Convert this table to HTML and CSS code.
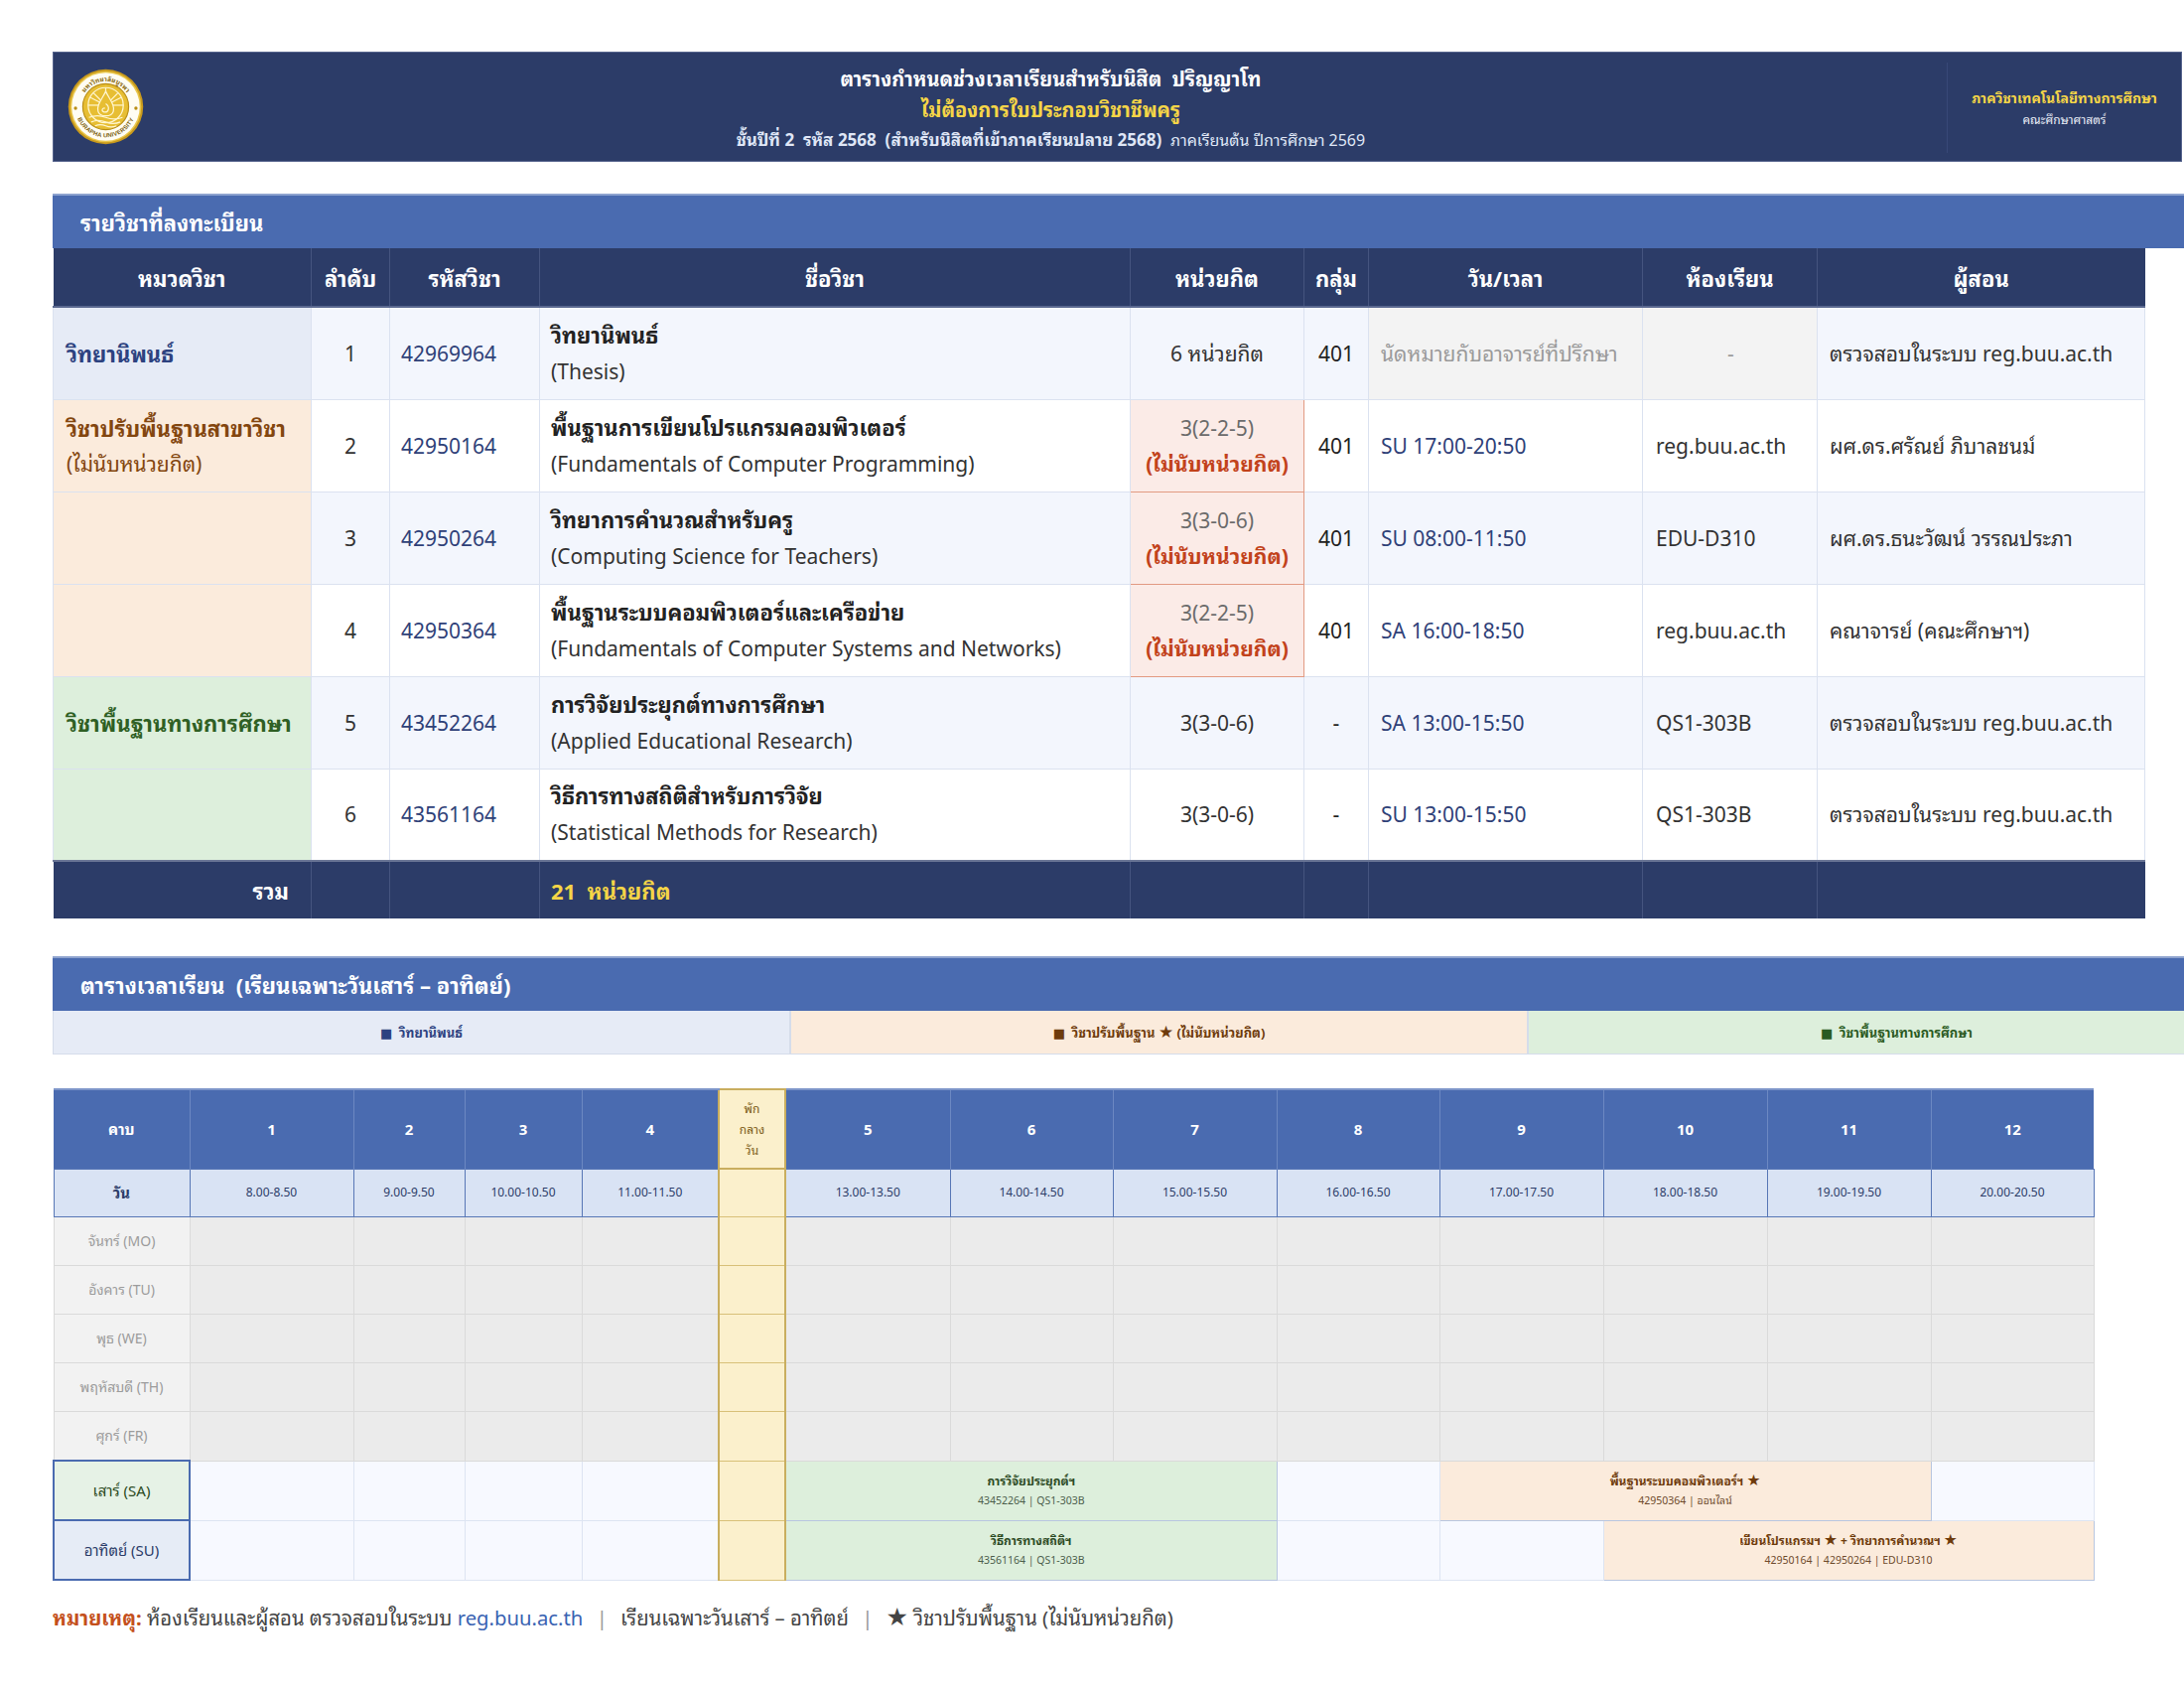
FILE: index.html
```html
<!DOCTYPE html>
<html lang="th">
<head>
<meta charset="utf-8">
<title>ตารางกำหนดช่วงเวลาเรียน</title>
<link rel="stylesheet" href="styles.css">
</head>
<body>
<div class="page">
  <header class="top">
    <div class="logo-box">
      <svg class="logo" viewBox="0 0 100 100" aria-label="Burapha University">
        <defs>
          <path id="arcTop" d="M 17 50 A 33 33 0 0 1 83 50"/>
          <path id="arcBot" d="M 10 50 A 40 40 0 0 0 90 50"/>
        </defs>
        <circle cx="50" cy="50" r="49" fill="#c99a1c"/>
        <circle cx="50" cy="50" r="46.5" fill="#e9c64a"/>
        <circle cx="50" cy="50" r="44.5" fill="#fffdf3"/>
        <circle cx="50" cy="50" r="30" fill="#e7be33" stroke="#b98e16" stroke-width="1.5"/>
        <text class="logo-th"><textPath href="#arcTop" startOffset="50%" text-anchor="middle">มหาวิทยาลัยบูรพา</textPath></text>
        <text class="logo-en"><textPath href="#arcBot" startOffset="50%" text-anchor="middle">BURAPHA UNIVERSITY</textPath></text>
        <circle cx="10.5" cy="52" r="2.2" fill="#b98e16"/>
        <circle cx="89.5" cy="52" r="2.2" fill="#b98e16"/>
        <g stroke="#fff6d0" stroke-width="1.6" fill="none">
          <circle cx="50" cy="48" r="23"/>
          <line x1="50" y1="48" x2="50" y2="25"/>
          <line x1="50" y1="48" x2="66" y2="32"/>
          <line x1="50" y1="48" x2="34" y2="32"/>
          <line x1="50" y1="48" x2="73" y2="48"/>
          <line x1="50" y1="48" x2="27" y2="48"/>
          <line x1="50" y1="48" x2="70" y2="38"/>
          <line x1="50" y1="48" x2="30" y2="38"/>
        </g>
        <path d="M50 30 C 56 42 62 48 60 56 C 58 64 42 64 40 56 C 38 48 44 42 50 30 Z" fill="#e7be33" stroke="#fff6d0" stroke-width="1.6"/>
        <path d="M50 46 C 56 50 54 58 48 57 C 44 56 45 51 49 52" fill="none" stroke="#fff6d0" stroke-width="1.6"/>
        <g stroke="#fff6d0" stroke-width="1.6" fill="none">
          <path d="M28 64 Q 39 60 50 64 T 72 64"/>
          <path d="M31 70 Q 40 66 50 70 T 69 70"/>
          <path d="M36 75 Q 43 72 50 75 T 64 75"/>
        </g>
      </svg>
    </div>
    <div class="title-box">
      <div class="t1">ตารางกำหนดช่วงเวลาเรียนสำหรับนิสิต&nbsp; ปริญญาโท</div>
      <div class="t2">ไม่ต้องการใบประกอบวิชาชีพครู</div>
      <div class="t3"><b>ชั้นปีที่ 2&nbsp; รหัส 2568&nbsp; (สำหรับนิสิตที่เข้าภาคเรียนปลาย 2568)</b>&nbsp; <span class="t3-sem">ภาคเรียนต้น ปีการศึกษา 2569</span></div>
    </div>
    <div class="dept">
      <div class="d1">ภาควิชาเทคโนโลยีทางการศึกษา</div>
      <div class="d2">คณะศึกษาศาสตร์</div>
    </div>
  </header>

  <section class="sec sec-courses">
    <h2 class="sec-bar">รายวิชาที่ลงทะเบียน</h2>
    <table class="courses">
      <colgroup>
        <col class="c-cat"><col class="c-no"><col class="c-code"><col class="c-name"><col class="c-cr"><col class="c-grp"><col class="c-time"><col class="c-room"><col class="c-tch">
      </colgroup>
      <thead>
        <tr>
          <th>หมวดวิชา</th><th>ลำดับ</th><th>รหัสวิชา</th><th>ชื่อวิชา</th><th>หน่วยกิต</th><th>กลุ่ม</th><th>วัน/เวลา</th><th>ห้องเรียน</th><th>ผู้สอน</th>
        </tr>
      </thead>
      <tbody>
        <tr class="r-alt">
          <td class="cat cat-thesis">วิทยานิพนธ์</td>
          <td class="no">1</td>
          <td class="code">42969964</td>
          <td class="name"><span class="nm-th">วิทยานิพนธ์</span><span class="nm-en">(Thesis)</span></td>
          <td class="cr">6 หน่วยกิต</td>
          <td class="grp">401</td>
          <td class="time muted">นัดหมายกับอาจารย์ที่ปรึกษา</td>
          <td class="room muted center">-</td>
          <td class="tch">ตรวจสอบในระบบ reg.buu.ac.th</td>
        </tr>
        <tr>
          <td class="cat cat-base"><span class="cat-l1">วิชาปรับพื้นฐานสาขาวิชา</span><span class="cat-l2">(ไม่นับหน่วยกิต)</span></td>
          <td class="no">2</td>
          <td class="code">42950164</td>
          <td class="name"><span class="nm-th">พื้นฐานการเขียนโปรแกรมคอมพิวเตอร์</span><span class="nm-en">(Fundamentals of Computer Programming)</span></td>
          <td class="cr cr-nc"><span class="cr-v">3(2-2-5)</span><span class="cr-x">(ไม่นับหน่วยกิต)</span></td>
          <td class="grp">401</td>
          <td class="time">SU 17:00-20:50</td>
          <td class="room">reg.buu.ac.th</td>
          <td class="tch">ผศ.ดร.ศรัณย์ ภิบาลชนม์</td>
        </tr>
        <tr class="r-alt">
          <td class="cat cat-base"></td>
          <td class="no">3</td>
          <td class="code">42950264</td>
          <td class="name"><span class="nm-th">วิทยาการคำนวณสำหรับครู</span><span class="nm-en">(Computing Science for Teachers)</span></td>
          <td class="cr cr-nc"><span class="cr-v">3(3-0-6)</span><span class="cr-x">(ไม่นับหน่วยกิต)</span></td>
          <td class="grp">401</td>
          <td class="time">SU 08:00-11:50</td>
          <td class="room">EDU-D310</td>
          <td class="tch">ผศ.ดร.ธนะวัฒน์ วรรณประภา</td>
        </tr>
        <tr>
          <td class="cat cat-base"></td>
          <td class="no">4</td>
          <td class="code">42950364</td>
          <td class="name"><span class="nm-th">พื้นฐานระบบคอมพิวเตอร์และเครือข่าย</span><span class="nm-en">(Fundamentals of Computer Systems and Networks)</span></td>
          <td class="cr cr-nc"><span class="cr-v">3(2-2-5)</span><span class="cr-x">(ไม่นับหน่วยกิต)</span></td>
          <td class="grp">401</td>
          <td class="time">SA 16:00-18:50</td>
          <td class="room">reg.buu.ac.th</td>
          <td class="tch">คณาจารย์ (คณะศึกษาฯ)</td>
        </tr>
        <tr class="r-alt">
          <td class="cat cat-edu">วิชาพื้นฐานทางการศึกษา</td>
          <td class="no">5</td>
          <td class="code">43452264</td>
          <td class="name"><span class="nm-th">การวิจัยประยุกต์ทางการศึกษา</span><span class="nm-en">(Applied Educational Research)</span></td>
          <td class="cr">3(3-0-6)</td>
          <td class="grp">-</td>
          <td class="time">SA 13:00-15:50</td>
          <td class="room">QS1-303B</td>
          <td class="tch">ตรวจสอบในระบบ reg.buu.ac.th</td>
        </tr>
        <tr>
          <td class="cat cat-edu"></td>
          <td class="no">6</td>
          <td class="code">43561164</td>
          <td class="name"><span class="nm-th">วิธีการทางสถิติสำหรับการวิจัย</span><span class="nm-en">(Statistical Methods for Research)</span></td>
          <td class="cr">3(3-0-6)</td>
          <td class="grp">-</td>
          <td class="time">SU 13:00-15:50</td>
          <td class="room">QS1-303B</td>
          <td class="tch">ตรวจสอบในระบบ reg.buu.ac.th</td>
        </tr>
      </tbody>
      <tfoot>
        <tr>
          <td class="tot-l">รวม</td><td></td><td></td>
          <td class="tot-v">21&nbsp; หน่วยกิต</td>
          <td></td><td></td><td></td><td></td><td></td>
        </tr>
      </tfoot>
    </table>
  </section>

  <section class="sec sec-sched">
    <h2 class="sec-bar">ตารางเวลาเรียน&nbsp; (เรียนเฉพาะวันเสาร์ – อาทิตย์)</h2>
    <div class="legend">
      <div class="lg lg-thesis">■&nbsp; วิทยานิพนธ์</div>
      <div class="lg lg-base">■&nbsp; วิชาปรับพื้นฐาน <span class="st">★</span> (ไม่นับหน่วยกิต)</div>
      <div class="lg lg-edu">■&nbsp; วิชาพื้นฐานทางการศึกษา</div>
    </div>

    <table class="tt">
      <colgroup>
        <col class="w137"><col class="w165"><col class="w112"><col class="w118"><col class="w138"><col class="w67">
        <col class="w166"><col class="w164"><col class="w165"><col class="w164"><col class="w165"><col class="w165"><col class="w165"><col class="w164">
      </colgroup>
      <thead>
        <tr class="tt-h">
          <th>คาบ</th><th>1</th><th>2</th><th>3</th><th>4</th>
          <th class="brk brk-h">พัก<br>กลาง<br>วัน</th>
          <th>5</th><th>6</th><th>7</th><th>8</th><th>9</th><th>10</th><th>11</th><th>12</th>
        </tr>
        <tr class="tt-d">
          <th class="tt-dl">วัน</th>
          <td>8.00-8.50</td><td>9.00-9.50</td><td>10.00-10.50</td><td>11.00-11.50</td>
          <td class="brk"></td>
          <td>13.00-13.50</td><td>14.00-14.50</td><td>15.00-15.50</td><td>16.00-16.50</td><td>17.00-17.50</td><td>18.00-18.50</td><td>19.00-19.50</td><td>20.00-20.50</td>
        </tr>
      </thead>
      <tbody>
        <tr class="wd"><th>จันทร์ (MO)</th><td></td><td></td><td></td><td></td><td class="brk"></td><td></td><td></td><td></td><td></td><td></td><td></td><td></td><td></td></tr>
        <tr class="wd"><th>อังคาร (TU)</th><td></td><td></td><td></td><td></td><td class="brk"></td><td></td><td></td><td></td><td></td><td></td><td></td><td></td><td></td></tr>
        <tr class="wd"><th>พุธ (WE)</th><td></td><td></td><td></td><td></td><td class="brk"></td><td></td><td></td><td></td><td></td><td></td><td></td><td></td><td></td></tr>
        <tr class="wd"><th>พฤหัสบดี (TH)</th><td></td><td></td><td></td><td></td><td class="brk"></td><td></td><td></td><td></td><td></td><td></td><td></td><td></td><td></td></tr>
        <tr class="wd"><th>ศุกร์ (FR)</th><td></td><td></td><td></td><td></td><td class="brk"></td><td></td><td></td><td></td><td></td><td></td><td></td><td></td><td></td></tr>
        <tr class="we">
          <th class="we-sa">เสาร์ (SA)</th>
          <td></td><td></td><td></td><td></td><td class="brk"></td>
          <td colspan="3" class="ev ev-g"><div class="ev-t">การวิจัยประยุกต์ฯ</div><div class="ev-s">43452264 | QS1-303B</div></td>
          <td></td>
          <td colspan="3" class="ev ev-o"><div class="ev-t">พื้นฐานระบบคอมพิวเตอร์ฯ <span class="st">★</span></div><div class="ev-s">42950364 | ออนไลน์</div></td>
          <td></td>
        </tr>
        <tr class="we">
          <th class="we-su">อาทิตย์ (SU)</th>
          <td></td><td></td><td></td><td></td><td class="brk"></td>
          <td colspan="3" class="ev ev-g"><div class="ev-t">วิธีการทางสถิติฯ</div><div class="ev-s">43561164 | QS1-303B</div></td>
          <td></td><td></td>
          <td colspan="3" class="ev ev-o"><div class="ev-t">เขียนโปรแกรมฯ <span class="st">★</span> + วิทยาการคำนวณฯ <span class="st">★</span></div><div class="ev-s">42950164 | 42950264 | EDU-D310</div></td>
        </tr>
      </tbody>
    </table>
  </section>

  <p class="note"><b class="note-k">หมายเหตุ:</b> ห้องเรียนและผู้สอน ตรวจสอบในระบบ <span class="note-link">reg.buu.ac.th</span> <span class="sep">|</span> เรียนเฉพาะวันเสาร์ – อาทิตย์ <span class="sep">|</span> <span class="star">★</span> วิชาปรับพื้นฐาน (ไม่นับหน่วยกิต)</p>
</div>
</body>
</html>
```

FILE: styles.css
```css
html, body {
  margin: 0;
  padding: 0;
  background: #ffffff;
}
body {
  font-family: "Noto Sans", "Noto Sans Thai Looped", "Noto Sans Thai", "DejaVu Sans", sans-serif;
  color: #333;
  overflow: hidden;
}
.page {
  width: 2147px;
  padding: 52px 0 0 53px;
  overflow: hidden;
}

/* ---------- header ---------- */
.top {
  display: flex;
  width: 2145px;
  height: 111px;
  box-sizing: border-box;
  background: #2c3c68;
  border: 1px solid #56648d;
}
.logo-box {
  width: 102px;
  flex: none;
  display: flex;
  align-items: center;
  padding-left: 14px;
  box-sizing: border-box;
}
.logo { width: 77px; height: 77px; display: block; }
.logo-th { font-size: 8.5px; font-weight: 700; fill: #8a6a10; }
.logo-en { font-size: 7.8px; font-weight: 700; fill: #7a5c0c; font-family: "Liberation Sans", sans-serif; letter-spacing: 0.3px; }

.title-box {
  flex: 1;
  display: flex;
  flex-direction: column;
  justify-content: center;
  align-items: center;
  padding-top: 4px;
}
.t1 { color: #ffffff; font-weight: 700; font-size: 20px; line-height: 32px; }
.t2 { color: #f5d547; font-weight: 700; font-size: 20px; line-height: 30px; }
.t3 { color: #dfe6f6; font-size: 17px; line-height: 30px; }
.t3 b { font-weight: 700; }
.t3-sem { font-size: 16px; }

.dept {
  width: 235px;
  flex: none;
  margin: 10px 0 8px;
  border-left: 1px solid #384877;
  display: flex;
  flex-direction: column;
  align-items: center;
  justify-content: center;
  gap: 2px;
}
.d1 { color: #f5d547; font-weight: 700; font-size: 14px; line-height: 22px; }
.d2 { color: #e8ecf6; font-size: 12px; line-height: 18px; }

/* ---------- section bars ---------- */
.sec-courses { margin-top: 32px; }
.sec-sched { margin-top: 38px; }
.sec-bar {
  margin: 0;
  width: 2147px;
  height: 55px;
  box-sizing: border-box;
  background: #4a6bb0;
  border-top: 2px solid #8ea3cf;
  color: #ffffff;
  font-size: 22px;
  font-weight: 700;
  line-height: 54px;
  padding-left: 28px;
}

/* ---------- course table ---------- */
.courses {
  width: 2107px;
  border-collapse: collapse;
  table-layout: fixed;
}
.c-cat { width: 260px; }
.c-no { width: 79px; }
.c-code { width: 151px; }
.c-name { width: 595px; }
.c-cr { width: 175px; }
.c-grp { width: 65px; }
.c-time { width: 276px; }
.c-room { width: 176px; }
.c-tch { width: 330px; }

.courses th {
  height: 58px;
  background: #2c3c68;
  color: #ffffff;
  font-size: 22px;
  font-weight: 700;
  text-align: center;
  padding: 0;
  border-left: 1px solid #45547f;
  border-bottom: 2px solid #5a6890;
}
.courses th:first-child { border-left: none; }
.courses td {
  height: 93px;
  box-sizing: border-box;
  padding: 0 11px;
  font-size: 21px;
  line-height: 30px;
  border: 1px solid #dbe2f0;
  vertical-align: middle;
  background: #ffffff;
  color: #333;
}
.courses tbody tr.r-alt td { background: #f3f6fd; }

.courses td.cat { font-weight: 700; padding-left: 13px; font-size: 22px; }
.courses td.cat-thesis { background: #e6ebf6 !important; color: #2d4280; }
.courses td.cat-base { background: #fbebdc !important; color: #83460f; }
.courses td.cat-edu { background: #ddefdc !important; color: #2f5f24; }
.cat-l1, .cat-l2 { display: block; line-height: 36px; }
.cat-l2 { font-weight: 400; font-size: 21px; }

.courses td.no { text-align: center; padding: 0; }
.courses td.code { color: #2f4178; }
.nm-th, .nm-en { display: block; line-height: 37px; }
.nm-th { font-weight: 700; color: #222; font-size: 22px; }
.nm-en { color: #333; }
.courses td.cr { text-align: center; padding: 0; }
.courses td.cr-nc {
  background: #fbebe7 !important;
  border: 1.5px solid #e29a82;
}
.cr-v, .cr-x { display: block; line-height: 36px; }
.cr-v { color: #6b6b6b; }
.cr-x { color: #c2421b; font-weight: 700; }
.courses td.grp { text-align: center; padding: 0; color: #222; }
.courses td.time { color: #2f4178; padding-left: 12px; }
.courses td.muted { color: #9a9a9a; background: #f3f3f3 !important; }
.courses td.center { text-align: center; }
.courses td.room { padding-left: 13px; }
.courses td.tch { padding-left: 12px; }

.courses tfoot td {
  height: 58px;
  background: #2c3c68;
  border: none;
  border-left: 1px solid #45547f;
  border-top: 2px solid #6a7696;
  color: #ffffff;
  font-weight: 700;
  font-size: 22px;
}
.courses tfoot td:first-child { border-left: none; }
.courses tfoot td.tot-l { text-align: right; padding-right: 22px; }
.courses tfoot td.tot-v { color: #f5d547; }

/* ---------- legend ---------- */
.legend {
  display: grid;
  grid-template-columns: 743px 743px 743px;
  height: 44px;
}
.lg {
  display: flex;
  align-items: center;
  justify-content: center;
  gap: 0;
  white-space: pre;
  font-size: 13px;
  font-weight: 700;
  border: 1px solid #d5dcea;
  border-top: none;
}
.lg-thesis { background: #e6ebf6; color: #2d4280; }
.lg-base { background: #fbebdc; color: #6e3b0c; }
.lg-edu { background: #ddefdc; color: #2a5a22; }
.st { font-size: 1.3em; line-height: 1; }

/* ---------- timetable ---------- */
.tt {
  margin-top: 34px;
  width: 2055px;
  border-collapse: collapse;
  table-layout: fixed;
}
.w137 { width: 137px; } .w165 { width: 165px; } .w112 { width: 112px; } .w118 { width: 118px; }
.w138 { width: 138px; } .w67 { width: 67px; } .w166 { width: 166px; } .w164 { width: 164px; }

.tt th, .tt td { padding: 0; text-align: center; vertical-align: middle; line-height: 18px; }

.tt-h th {
  height: 78px;
  background: #4a6bb0;
  color: #ffffff;
  font-size: 15px;
  font-weight: 700;
  border-left: 1px solid #6c88c2;
  border-top: 2px solid #7d95c9;
}
.tt-h th:first-child { border-left: none; }
.tt-h th.brk-h {
  background: #fbf0cc;
  color: #7a5a14;
  font-size: 12px;
  font-weight: 400;
  line-height: 21px;
  border: 2px solid #c9ae5f;
}
.tt-d th, .tt-d td {
  height: 47px;
  background: #d9e3f4;
  color: #2c3c68;
  font-size: 12px;
  border: 1.5px solid #5877b6;
}
.tt-d th.tt-dl { font-size: 15px; font-weight: 700; }
.tt-d td.brk { background: #fbf0cc; border: 2px solid #c9ae5f; }

.wd th, .wd td {
  height: 48px;
  background: #ebebeb;
  border: 1px solid #dadada;
}
.wd th {
  background: #f2f2f2;
  color: #9c9c9c;
  font-size: 14px;
  font-weight: 400;
}
.tt td.brk {
  background: #fbf0cc;
  border-left: 2px solid #c9ae5f;
  border-right: 2px solid #c9ae5f;
  border-top: 1px solid #d8c078;
  border-bottom: 1px solid #d8c078;
}

.we th, .we td {
  height: 58px;
  background: #f7f9ff;
  border: 1px solid #dde4f2;
}
.we th {
  font-size: 15px;
  font-weight: 400;
  border: 2px solid #4a6bb0;
}
.we th.we-sa { background: #e6f2e6; color: #2c4a22; }
.we th.we-su { background: #e6ecf6; color: #2c3c68; }

.tt td.ev { border: 1.5px solid #b8c6e0; }
.tt td.ev-g { background: #ddefdc; }
.tt td.ev-o { background: #fbebdc; }
.ev-t { font-size: 12px; font-weight: 700; line-height: 20px; }
.ev-s { font-size: 10.5px; line-height: 18px; }
.ev-g .ev-t { color: #2c4a24; }
.ev-g .ev-s { color: #4c5e4c; }
.ev-o .ev-t { color: #6e3b0c; }
.ev-o .ev-s { color: #6e4a2c; }

/* ---------- note ---------- */
.note {
  margin: 20px 0 0;
  font-size: 20.3px;
  line-height: 30px;
  color: #444;
}
.note-k { color: #c4501c; }
.note-link { color: #3a63b2; }
.sep { color: #999; padding: 0 8px; }
.star { color: #444; font-size: 25px; }
```
